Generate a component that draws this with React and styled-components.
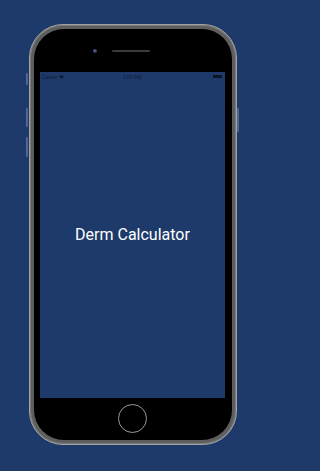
import React from "react";
import styled, { createGlobalStyle } from "styled-components";

const Global = createGlobalStyle`
  html, body { margin: 0; padding: 0; background: #1d3a6b; }
  body { font-family: Roboto, "Liberation Sans", sans-serif; }
`;

const Page = styled.div`
  width: 265px;
  height: 471px;
  background: #1d3a6b;
  display: flex;
  justify-content: center;
  padding-top: 24px;
  box-sizing: border-box;
  overflow: hidden;
`;

const Phone = styled.div`
  position: relative;
  width: 208px;
  height: 421px;
  box-sizing: border-box;
  border-radius: 34px;
  border: 1.5px solid #a3a3a3;
  background: #5e5e5e;
  box-shadow: inset 0 0 0 1px #7a7a7a;
  padding: 4px;
  display: flex;
`;

const SideButton = styled.div`
  position: absolute;
  width: 2px;
  top: ${(p) => p.$top}px;
  height: ${(p) => p.$h}px;
  ${(p) => (p.$right ? "right: -3.5px;" : "left: -3.5px;")}
  background: #7686a2;
  border-radius: 1px;
  opacity: 0.6;
`;

const Body = styled.div`
  flex: 1;
  background: #000;
  border-radius: 30px;
  display: flex;
  flex-direction: column;
  padding: 0 6.5px;
  box-sizing: border-box;
`;

const TopBar = styled.div`
  height: 42.5px;
  display: flex;
  align-items: center;
  justify-content: center;
  padding-top: 1px;
  box-sizing: border-box;
`;

const Camera = styled.div`
  width: 4px;
  height: 4px;
  border-radius: 50%;
  background: radial-gradient(circle at 40% 40%, #5a64a0, #1c2040);
  margin-right: 15px;
  margin-left: -22px;
`;

const Speaker = styled.div`
  width: 38px;
  height: 1.5px;
  border-radius: 1px;
  background: #3a3a3a;
`;

const Screen = styled.div`
  height: 326px;
  background: #1d3a6b;
  display: flex;
  flex-direction: column;
`;

const StatusBar = styled.div`
  height: 10px;
  display: flex;
  align-items: center;
  justify-content: space-between;
  padding: 0 3px 0 2px;
  font-family: "Liberation Sans", Arial, sans-serif;
  font-size: 5px;
  color: #0d1b33;
`;

const StatusLeft = styled.div`
  display: flex;
  align-items: center;
  gap: 2px;
  width: 40px;
`;

const StatusRight = styled.div`
  display: flex;
  justify-content: flex-end;
  width: 40px;
`;

const Battery = styled.div`
  width: 9px;
  height: 3.5px;
  background: #0b1528;
  border-radius: 0.5px;
`;

const Content = styled.div`
  flex: 1;
  display: flex;
  align-items: center;
  justify-content: center;
  padding-bottom: 10px;
`;

const Title = styled.div`
  font-family: Roboto, "Liberation Sans", sans-serif;
  font-size: 16px;
  color: #ffffff;
`;

const BottomBar = styled.div`
  flex: 1;
  display: flex;
  align-items: center;
  justify-content: center;
`;

const HomeButton = styled.div`
  width: 27px;
  height: 27px;
  border-radius: 50%;
  border: 1px solid #9a9a9a;
  background: #000;
`;

function Wifi() {
  return (
    <svg width="5" height="4" viewBox="0 0 10 8">
      <path d="M5 8 L0 2.5 A7.5 7.5 0 0 1 10 2.5 Z" fill="#0d1b33" />
    </svg>
  );
}

export default function App() {
  return (
    <>
      <Global />
      <Page>
        <Phone>
          <SideButton $top={48} $h={12} />
          <SideButton $top={83} $h={19} />
          <SideButton $top={112} $h={20} />
          <SideButton $right $top={83} $h={24} />
          <Body>
            <TopBar>
              <Camera />
              <Speaker />
            </TopBar>
            <Screen>
              <StatusBar>
                <StatusLeft>
                  <span>Carrier</span>
                  <Wifi />
                </StatusLeft>
                <span>1:00 PM</span>
                <StatusRight>
                  <Battery />
                </StatusRight>
              </StatusBar>
              <Content>
                <Title>Derm Calculator</Title>
              </Content>
            </Screen>
            <BottomBar>
              <HomeButton />
            </BottomBar>
          </Body>
        </Phone>
      </Page>
    </>
  );
}
